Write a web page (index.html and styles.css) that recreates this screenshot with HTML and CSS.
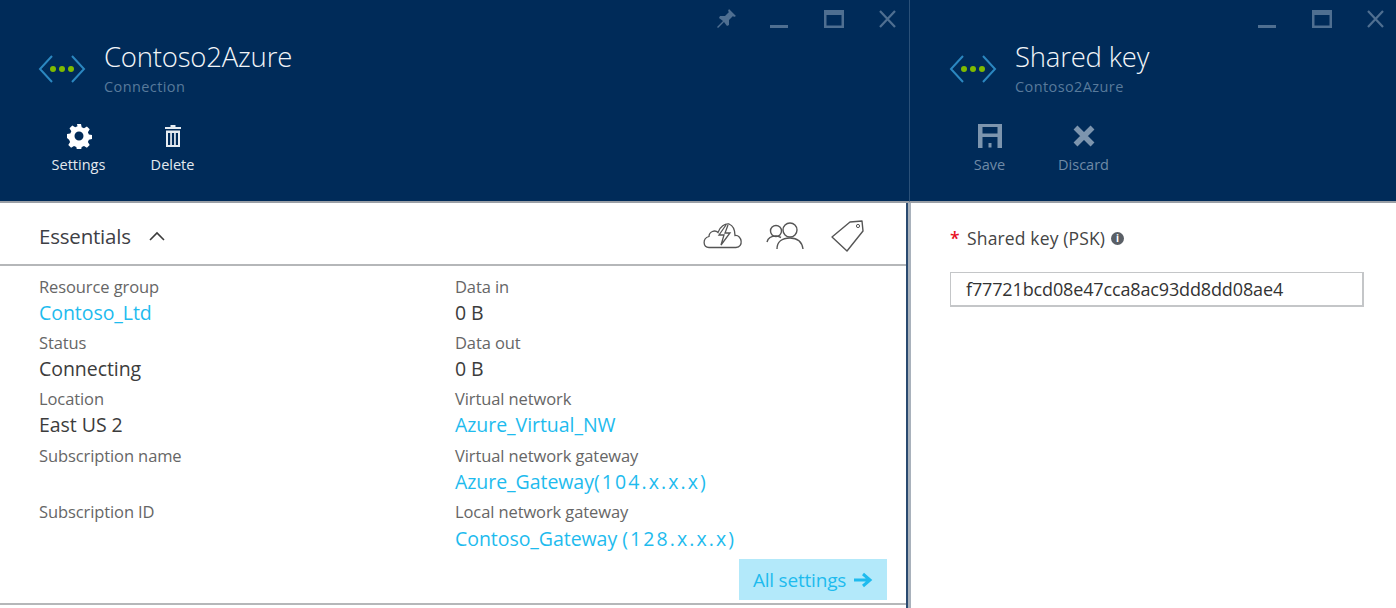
FILE: index.html
```html
<!DOCTYPE html>
<html lang="en">
<head>
<meta charset="utf-8">
<title>Contoso2Azure</title>
<link rel="stylesheet" href="styles.css">
</head>
<body>
<div class="app">
  <section class="blade blade-left">
    <header class="head">
      <div class="winctl">
        <svg class="ctl" width="24" height="24" viewBox="0 0 24 24"><path d="M15 2l7 7-2 1-1-1-4 4 0 5-2 1-3-4-6 6-1-1 6-6-4-3 1-2 5 0 4-4-1-1z" fill="#4f6f91"/></svg>
        <svg class="ctl" width="24" height="24" viewBox="0 0 24 24"><rect x="2" y="18" width="18" height="3" fill="#4f6f91"/></svg>
        <svg class="ctl" width="24" height="24" viewBox="0 0 24 24"><path d="M2 3h20v18H2zM4.500 8v10.500h15V8z" fill="#4f6f91" fill-rule="evenodd"/></svg>
        <svg class="ctl" width="24" height="24" viewBox="0 0 24 24"><path d="M4 4l15 16M19 4L4 20" stroke="#4f6f91" stroke-width="2.200" fill="none"/></svg>
      </div>
      <div class="title-row">
        <svg class="conn" width="48" height="32" viewBox="0 0 48 32"><path d="M14 3L2 16l12 13M34 3l12 13-12 13" stroke="#2b87c0" stroke-width="2" fill="none"/><circle cx="15" cy="16" r="3" fill="#7fba00"/><circle cx="24" cy="16" r="3" fill="#7fba00"/><circle cx="33" cy="16" r="3" fill="#7fba00"/></svg>
        <div class="titles">
          <h1>Contoso2Azure</h1>
          <p>Connection</p>
        </div>
      </div>
      <div class="cmds">
        <div class="cmd">
          <svg width="26" height="26" viewBox="0 0 26 26"><path fill="#fff" fill-rule="evenodd" d="M11 1h4l.7 3.300 2.300 1 2.900-1.800 2.800 2.800-1.800 2.900 1 2.300 3.100.5v4l-3.100.7-1 2.300 1.800 2.900-2.800 2.800-2.900-1.800-2.300 1-.7 3.100h-4l-.7-3.100-2.300-1-2.900 1.800-2.800-2.800 1.800-2.900-1-2.300L1 15v-4l3.300-.5 1-2.300L3.500 5.300l2.800-2.800 2.900 1.800 2.300-1zM13 8.500a4.500 4.500 0 1 0 0 9 4.500 4.500 0 0 0 0-9z"/></svg>
          <span>Settings</span>
        </div>
        <div class="cmd">
          <svg width="26" height="26" viewBox="0 0 26 26"><path fill="#e6ecf2" fill-rule="evenodd" d="M10.500 2h5v2H21v2H5V4h5.500zM6 7.500h14V24H6zM8 10v12h2.200V10zM11.900 10v12h2.200V10zM15.800 10v12H18V10z"/></svg>
          <span>Delete</span>
        </div>
      </div>
    </header>
    <div class="essentials-bar">
      <div class="ess-title"><span>Essentials</span>
        <svg width="18" height="12" viewBox="0 0 18 12"><path d="M2 10l7-7 7 7" stroke="#3c3c3c" stroke-width="1.600" fill="none"/></svg>
      </div>
      <div class="ess-icons">
        <svg width="42" height="28" viewBox="0 0 42 28"><path d="M12 25.500H7c-6 0-7-9 0-11 0-5 6-7 9-4 2-6 7-9 11-8.500 5 2 6 6 6 11.500 7-1 9 12 1 12z" stroke="#555" stroke-width="1.300" fill="none"/><path d="M24 3l-7 10h5l-3 10 9-12h-5l3-8" stroke="#555" stroke-width="1.300" fill="#fff"/></svg>
        <svg class="people" width="38" height="28" viewBox="0 0 38 28"><circle cx="10" cy="9" r="5.500" stroke="#555" stroke-width="1.400" fill="none"/><circle cx="24" cy="8" r="7" stroke="#555" stroke-width="1.400" fill="none"/><path d="M1 20c1-4 4-6 9-6 2 0 3 .5 5 1.500M11 27c0-7 5-11 13-11s12 4 13 11" stroke="#555" stroke-width="1.400" fill="none"/></svg>
        <svg class="tag" width="34" height="32" viewBox="0 0 34 32"><path d="M1 17L19 2l12-1 1 10-16 20z" stroke="#555" stroke-width="1.400" fill="none" stroke-linejoin="round"/><circle cx="27" cy="6" r="1.600" stroke="#555" fill="none"/></svg>
      </div>
    </div>
    <div class="props">
      <div class="col">
        <div class="prop"><label>Resource group</label><a>Contoso_Ltd</a></div>
        <div class="prop"><label>Status</label><b>Connecting</b></div>
        <div class="prop"><label>Location</label><b>East US 2</b></div>
        <div class="prop"><label>Subscription name</label></div>
        <div class="prop"><label>Subscription ID</label></div>
      </div>
      <div class="col">
        <div class="prop"><label>Data in</label><b>0 B</b></div>
        <div class="prop"><label>Data out</label><b>0 B</b></div>
        <div class="prop"><label>Virtual network</label><a>Azure_Virtual_NW</a></div>
        <div class="prop"><label>Virtual network gateway</label><a>Azure_Gateway<i class="ip">(104.x.x.x)</i></a></div>
        <div class="prop"><label>Local network gateway</label><a>Contoso_Gateway <i class="ip">(128.x.x.x)</i></a></div>
      </div>
    </div>
    <div class="foot"><div class="allset">All settings
      <svg width="20" height="16" viewBox="0 0 20 16"><path d="M1 8h15M10 2l7 6-7 6" stroke="#1ebbee" stroke-width="3" fill="none"/></svg></div></div>
  </section>
  <section class="blade blade-right">
    <header class="head">
      <div class="winctl">
        <svg class="ctl" width="24" height="24" viewBox="0 0 24 24"><rect x="2" y="18" width="18" height="3" fill="#4f6f91"/></svg>
        <svg class="ctl" width="24" height="24" viewBox="0 0 24 24"><path d="M2 3h20v18H2zM4.500 8v10.500h15V8z" fill="#4f6f91" fill-rule="evenodd"/></svg>
        <svg class="ctl" width="24" height="24" viewBox="0 0 24 24"><path d="M4 4l15 16M19 4L4 20" stroke="#4f6f91" stroke-width="2.200" fill="none"/></svg>
      </div>
      <div class="title-row">
        <svg class="conn" width="48" height="32" viewBox="0 0 48 32"><path d="M14 3L2 16l12 13M34 3l12 13-12 13" stroke="#2b87c0" stroke-width="2" fill="none"/><circle cx="15" cy="16" r="3" fill="#7fba00"/><circle cx="24" cy="16" r="3" fill="#7fba00"/><circle cx="33" cy="16" r="3" fill="#7fba00"/></svg>
        <div class="titles">
          <h1>Shared key</h1>
          <p>Contoso2Azure</p>
        </div>
      </div>
      <div class="cmds dim">
        <div class="cmd">
          <svg width="26" height="26" viewBox="0 0 26 26"><path fill="#7d95ae" fill-rule="evenodd" d="M1 1h24v24h-4.500V14h-15v11H1zM5.500 4v6.500h15V4zM11.500 20h3v4.500h-3z"/></svg>
          <span>Save</span>
        </div>
        <div class="cmd">
          <svg width="26" height="26" viewBox="0 0 26 26"><path d="M4.500 4.500l17 17M21.500 4.500l-17 17" stroke="#7d95ae" stroke-width="5.500" fill="none"/></svg>
          <span>Discard</span>
        </div>
      </div>
    </header>
    <div class="form">
      <div class="field-label"><span class="req">*</span><span>Shared key (PSK)</span><span class="info">i</span></div>
      <div class="input">f77721bcd08e47cca8ac93dd8dd08ae4</div>
    </div>
  </section>
</div>
</body>
</html>
```
FILE: styles.css
```css
* { box-sizing: border-box; }
html, body { margin: 0; height: 608px; overflow: hidden; background: #fff; }
body { font-family: "Open Sans", "Liberation Sans", sans-serif; color: #3c3c3c; }
.app { display: flex; height: 608px; width: 1396px; }
.blade { display: flex; flex-direction: column; height: 100%; }
.blade-left { width: 911px; border-right: 3px solid #a9b2bc; box-shadow: inset -2px 0 0 #2a4a70; }
.blade-right { flex: 1; }
.head { height: 203px; flex: none; background: #002b59; border-bottom: 2px solid #9a9fa6; padding: 0 0 0 39px; }
.blade-left .head { margin-right: -3px; border-right: 2px solid #2a5078; }
.blade-right .head { margin-left: -1px; padding-left: 40px; }
.winctl { display: flex; justify-content: flex-end; gap: 30px; height: 38px; padding: 7px 9px 0 0; }
.blade-right .winctl { padding-right: 8px; }
.title-row { display: flex; align-items: center; height: 50px; margin-top: 4px; }
.conn { flex: none; margin-top: 4px; margin-left: -1px; }
.titles { margin-left: 18px; }
h1 { margin: 0; font-weight: 300; font-size: 27.500px; line-height: 34px; color: #f2f5f8; letter-spacing: -0.2px; }
.titles p { margin: 4px 0 0; font-size: 14.500px; line-height: 17px; color: #587a9b; letter-spacing: 0.4px; }
.cmds { display: flex; margin: 31px 0 0 5px; gap: 25px; }
.cmds .cmd { width: 69px; }
.cmd { display: flex; flex-direction: column; align-items: center; gap: 7px; font-size: 14.500px; line-height: 17px; color: #e3e9ef; letter-spacing: 0; }
.cmd svg { display: block; }
.dim .cmd { color: #6f8aa6; }
.essentials-bar { height: 63px; flex: none; margin-right: 2px; padding: 4px 41px 0 39px; border-bottom: 2px solid #b5b7b9; display: flex; align-items: center; justify-content: space-between; }
.ess-title { display: flex; align-items: center; gap: 17px; font-size: 20.500px; color: #3e4045; letter-spacing: -0.2px; }
.ess-icons { display: flex; align-items: center; }
.people { margin-left: 22px; }
.tag { margin-left: 27px; }
.props { display: flex; padding: 8px 0 0 39px; }
.col { width: 416px; }
.prop { height: 56.200px; }
.prop label { display: block; font-size: 16.500px; line-height: 26px; color: #666; letter-spacing: -0.1px; }
.prop a, .prop b { display: block; font-size: 19.500px; line-height: 26px; font-weight: 400; letter-spacing: -0.05px; }
.prop a { color: #1ebbee; }
.prop b { color: #3c3c3c; }
.prop:last-child a { margin-top: 1px; }
.ip { font-style: normal; letter-spacing: 2.100px; }
.foot { display: flex; justify-content: flex-end; margin-top: auto; padding: 0 19px 3px 0; margin-right: 2px; border-bottom: 2px solid #b5b7b9; margin-bottom: 3px; }
.allset { width: 148px; height: 41px; background: #b3e9fa; color: #1ebbee; font-size: 19px; letter-spacing: -0.2px; display: flex; align-items: center; justify-content: center; gap: 7px; }
.form { padding: 23px 32px 0 39px; }
.field-label { display: flex; align-items: center; font-size: 17.500px; line-height: 24px; color: #444; letter-spacing: 0.15px; }
.req { color: #e81123; font-weight: 600; width: 17px; }
.info { display: inline-flex; width: 13px; height: 13px; margin-left: 6px; align-items: center; justify-content: center; border-radius: 50%; background: #5a5f66; color: #fff; font-size: 10px; font-weight: 700; line-height: 1; }
.input { margin-top: 22px; height: 35px; border: 1px solid #c4c6c8; border-width: 1px 2px 2px 1px; padding-left: 15px; font-size: 18px; line-height: 33px; color: #333; letter-spacing: -0.14px; }
```
